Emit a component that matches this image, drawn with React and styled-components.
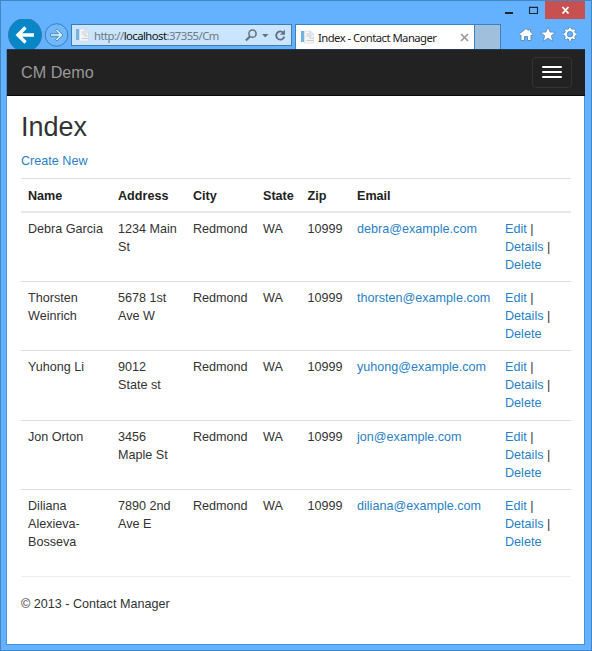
import React from "react";
import styled, { createGlobalStyle } from "styled-components";

const GlobalStyle = createGlobalStyle`
  *, *::before, *::after { box-sizing: border-box; }
  body { margin: 0; font-family: "Liberation Sans", Arial, sans-serif; overflow: hidden; }
  svg { display: block; flex: none; }
`;

const Window = styled.div`
  width: 592px;
  height: 651px;
  display: flex;
  flex-direction: column;
  background: #64b2ff;
  border: 1px solid #4585c4;
  padding: 0 6px 5px 5px;
`;

const TitleBar = styled.div`
  height: 18px;
  display: flex;
  justify-content: flex-end;
  flex: none;
`;

const WindowButton = styled.div`
  width: ${(p) => p.$width}px;
  height: 18px;
  background: ${(p) => (p.$close ? "#c75050" : "transparent")};
`;

const Toolbar = styled.div`
  height: 30px;
  display: flex;
  align-items: flex-start;
  flex: none;
`;

const NavButtons = styled.div`
  width: 65px;
  height: 30px;
  flex: none;
`;

const AddressBar = styled.div`
  width: 221px;
  height: 22px;
  margin-top: 5px;
  display: flex;
  align-items: center;
  padding-left: 3px;
  background: #cae5ff;
  border: 1px solid #427caf;
  flex: none;
`;

const ChromeText = styled.span`
  font-family: "Noto Sans", "Open Sans", sans-serif;
  font-size: ${(p) => p.$size}px;
  letter-spacing: ${(p) => p.$spacing}px;
  line-height: 20px;
  white-space: nowrap;
  color: ${(p) => p.$color};
`;

const Url = styled(ChromeText)`
  width: 153px;
  padding: 1px 0 0 3px;
`;

const Host = styled.span`
  color: #111;
`;

const Tab = styled.div`
  width: 180px;
  height: 25px;
  margin: 5px 0 0 3px;
  padding: 0 5px 0 4px;
  display: flex;
  align-items: center;
  gap: 2px;
  background: #fff;
  border: 1px solid #3d81bd;
  border-bottom: 0;
  flex: none;
`;

const TabTitle = styled(ChromeText)`
  flex: 1;
  padding-top: 1px;
`;

const NewTab = styled.div`
  width: 26px;
  height: 25px;
  margin-top: 5px;
  background: #a0bfdd;
  border: 1px solid #3d81bd;
  border-left: 0;
  border-bottom: 0;
  flex: none;
`;

const Tools = styled.div`
  display: flex;
  margin: 7px 0 0 16px;
  gap: 4px;
`;

const Page = styled.div`
  flex: 1;
  display: flex;
  flex-direction: column;
  background: #fff;
  border: 1px solid #3f93e0;
  border-top: 0;
`;

const Navbar = styled.nav`
  height: 47px;
  margin: 0 -1px 0 0;
  display: flex;
  align-items: center;
  justify-content: space-between;
  padding: 0 13px 1px 14px;
  background: #222;
  border-top: 1px solid #1c3a57;
  border-bottom: 1px solid #080808;
  flex: none;
`;

const Brand = styled.span`
  font-size: 16.2px;
  color: #999;
`;

const MenuButton = styled.div`
  width: 40px;
  height: 31px;
  border: 1px solid #333;
  border-radius: 4px;
  display: flex;
  flex-direction: column;
  align-items: center;
  justify-content: center;
  gap: 3px;
`;

const MenuLine = styled.span`
  width: 20px;
  height: 2px;
  border-radius: 1px;
  background: #fff;
`;

const Content = styled.main`
  padding: 0 13px 0 14px;
  font-size: 12.6px;
  line-height: 18px;
  color: #333;
`;

const Heading = styled.h2`
  margin: 15px 0 0;
  font-size: 27px;
  line-height: 32px;
  font-weight: 400;
`;

const Link = styled.span`
  color: #2a7fc6;
`;

const Create = styled.p`
  margin: 9px 0 8px;
`;

const Table = styled.table`
  width: 550px;
  table-layout: fixed;
  border-collapse: separate;
  border-spacing: 0;
`;

const Col = styled.col`
  width: ${(p) => p.$width}px;
`;

const Th = styled.th`
  height: 33px;
  padding: 8px 0 6px 7px;
  text-align: left;
  color: #222;
  border-top: 1px solid #ddd;
`;

const Row = styled.tr`
  height: ${(p) => (p.$first ? 70 : 69.4)}px;
`;

const Td = styled.td`
  padding: 7px 7px 0;
  vertical-align: top;
  border-top: ${(p) => (p.$first ? "2px solid #e8e8e8" : "1px solid #ddd")};
`;

const AddressTd = styled(Td)`
  padding-right: 8px;
`;

const EmailTd = styled(Td)`
  padding-right: 0;
`;

const Rule = styled.hr`
  margin: 17px 0 18px;
  border: 0;
  border-top: 1px solid #eee;
`;

const Footer = styled.footer`
  color: #333;
`;

const columns = [90, 75, 70, 44.5, 49.5, 148, 73];
const headers = ["Name", "Address", "City", "State", "Zip", "Email", ""];
const contacts = [
  ["Debra Garcia", "1234 Main St", "debra@example.com"],
  ["Thorsten Weinrich", "5678 1st Ave W", "thorsten@example.com"],
  ["Yuhong Li", "9012 State st", "yuhong@example.com"],
  ["Jon Orton", "3456 Maple St", "jon@example.com"],
  ["Diliana Alexieva-Bosseva", "7890 2nd Ave E", "diliana@example.com"],
];

function PageIcon() {
  return (
    <svg width="16" height="16" viewBox="0 0 16 16">
      <path d="M1 2h3v11H1z" fill="#76b2df" />
      <path d="M4.500 2h6l3 3v9h-9z" fill="#f4f6f8" stroke="#ccd4da" strokeWidth=".6" />
      <path d="M6.500 5h3M6.500 7h5M9 9h4M6.500 11.500h7" stroke="#b7c1c9" strokeWidth=".8" />
      <path d="M10.300 2v3.200h3.200" fill="none" stroke="#bdc8d0" strokeWidth=".7" />
    </svg>
  );
}

function NavIcons() {
  return (
    <svg width="65" height="30" viewBox="6 19 65 30">
      <circle cx="25" cy="35" r="16.500" fill="#0786c8" stroke="#3779ad" />
      <path d="M34 35H18M25.500 27.500L18 35L25.500 42.500" fill="none" stroke="#fff" strokeWidth="3.400" />
      <circle cx="56.500" cy="35" r="11.300" fill="#70b8fc" stroke="#3d7db8" />
      <path d="M50.500 33.700h8l-3-3.200 1.500-1.500 6 6-6 6-1.500-1.500 3-3.200h-8z" fill="#d3eaff" stroke="#427caf" strokeWidth=".8" />
    </svg>
  );
}

function AddressIcons() {
  return (
    <svg width="44" height="20" viewBox="245 25 44 20">
      <circle cx="253.500" cy="33.700" r="3.600" fill="none" stroke="#65717d" strokeWidth="1.500" />
      <path d="M251 36.500l-4.200 4" stroke="#65717d" strokeWidth="2.200" />
      <path d="M263 34h6.500l-3.200 3.500z" fill="#65717d" />
      <path d="M284.300 32.700A4.100 4.100 0 1 0 285.300 36.500" fill="none" stroke="#65717d" strokeWidth="1.800" />
      <path d="M281 34.700h5v-5z" fill="#65717d" />
    </svg>
  );
}

function HomeIcon() {
  return (
    <svg width="18" height="18" viewBox="0 0 18 18">
      <path d="M4 9v5.500h3.500v-4h3v4H14V9l1 .8 1-1.500L13.500 6V3.500h-2v1L9 2.500 2 8.300l1 1.500z" fill="#fff" stroke="#527da6" strokeWidth=".8" />
    </svg>
  );
}

function StarIcon() {
  return (
    <svg width="18" height="18" viewBox="0 0 18 18">
      <path d="M9 1l2 5 5.500.3-4.200 3.500 1.500 5.500L9 12.200l-4.800 3.100 1.500-5.500L1.500 6.300 7 6z" fill="#fff" stroke="#527da6" strokeWidth=".7" />
    </svg>
  );
}

function GearIcon() {
  return (
    <svg width="18" height="18" viewBox="0 0 18 18">
      <g stroke="#527da6">
        <path d="M9 1.200v14M2 8.200h14M4 3.200l10 10M4 13.200l10-10" strokeWidth="3" />
        <circle cx="9" cy="8.200" r="4" fill="none" strokeWidth="3.200" />
      </g>
      <g stroke="#fff">
        <path d="M9 1.700v13M2.500 8.200h13M4.400 3.600l9.200 9.200M4.400 12.800l9.200-9.200" strokeWidth="1.900" />
        <circle cx="9" cy="8.200" r="4" fill="#64b2ff" strokeWidth="2.200" />
      </g>
      <circle cx="9" cy="8.200" r="2.700" fill="#64b2ff" stroke="#527da6" strokeWidth=".6" />
    </svg>
  );
}

function ContactRow({ contact, first }) {
  const [name, address, email] = contact;
  return (
    <Row $first={first}>
      <Td $first={first}>{name}</Td>
      <AddressTd $first={first}>{address}</AddressTd>
      <Td $first={first}>Redmond</Td>
      <Td $first={first}>WA</Td>
      <Td $first={first}>10999</Td>
      <EmailTd $first={first}><Link>{email}</Link></EmailTd>
      <Td $first={first}>
        <Link>Edit</Link> |<br />
        <Link>Details</Link> |<br />
        <Link>Delete</Link>
      </Td>
    </Row>
  );
}

export default function App() {
  return (
    <>
      <GlobalStyle />
      <Window>
        <TitleBar>
          <WindowButton $width={27}>
            <svg width="27" height="18"><path d="M7 12h8" stroke="#1c2733" strokeWidth="2" /></svg>
          </WindowButton>
          <WindowButton $width={20}>
            <svg width="20" height="18"><path d="M4.500 6.500h8v6h-8zM4 6.200h9" fill="none" stroke="#1c2733" strokeWidth="1.100" /></svg>
          </WindowButton>
          <WindowButton $width={40} $close>
            <svg width="40" height="18"><path d="M17.500 6l6 6.500M23.500 6l-6 6.500" stroke="#fff" strokeWidth="1.800" /></svg>
          </WindowButton>
        </TitleBar>
        <Toolbar>
          <NavButtons><NavIcons /></NavButtons>
          <AddressBar>
            <PageIcon />
            <Url $size={11.3} $spacing={-0.55} $color="#6e7881">http://<Host>localhost</Host>:37355/Cm</Url>
            <AddressIcons />
          </AddressBar>
          <Tab>
            <PageIcon />
            <TabTitle $size={11.3} $spacing={-0.55} $color="#222">Index - Contact Manager</TabTitle>
            <svg width="9" height="9"><path d="M1 1l7 7M8 1L1 8" stroke="#999" strokeWidth="1.700" /></svg>
          </Tab>
          <NewTab />
          <Tools><HomeIcon /><StarIcon /><GearIcon /></Tools>
        </Toolbar>
        <Page>
          <Navbar>
            <Brand>CM Demo</Brand>
            <MenuButton><MenuLine /><MenuLine /><MenuLine /></MenuButton>
          </Navbar>
          <Content>
            <Heading>Index</Heading>
            <Create><Link>Create New</Link></Create>
            <Table>
              <colgroup>{columns.map((width, i) => <Col key={i} $width={width} />)}</colgroup>
              <thead><tr>{headers.map((label, i) => <Th key={i}>{label}</Th>)}</tr></thead>
              <tbody>{contacts.map((contact, i) => <ContactRow key={contact[0]} contact={contact} first={i === 0} />)}</tbody>
            </Table>
            <Rule />
            <Footer>© 2013 - Contact Manager</Footer>
          </Content>
        </Page>
      </Window>
    </>
  );
}
